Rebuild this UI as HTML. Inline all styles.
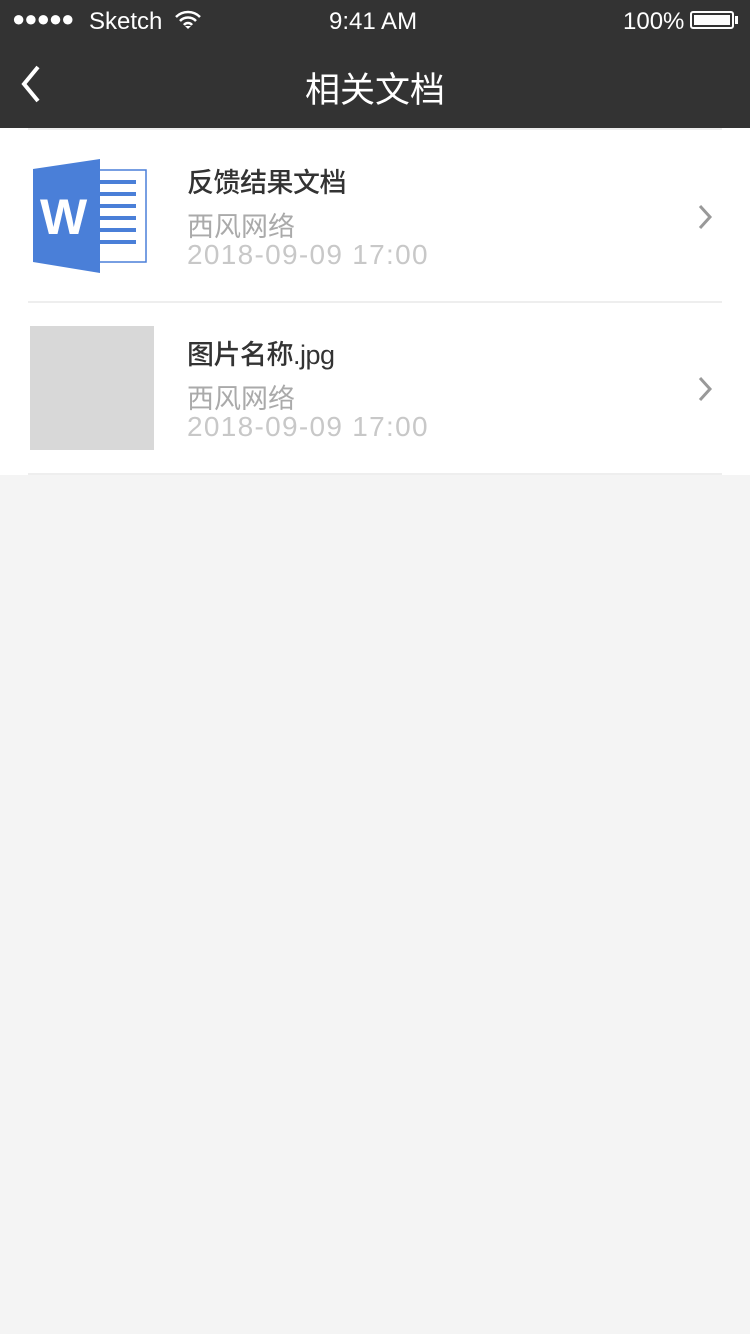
<!DOCTYPE html>
<html><head><meta charset="utf-8"><style>
body{margin:0;width:750px;height:1334px;background:#f4f4f4;font-family:"Liberation Sans","Noto Sans CJK SC",sans-serif;position:relative;overflow:hidden}
.hdr{position:absolute;left:0;top:0;width:750px;height:128px;background:#333}
.t{position:absolute;color:#fff}
.list{position:absolute;left:0;top:128px;width:750px;height:347px;background:#fff}
.sep{position:absolute;left:28px;width:694px;height:2px;background:#eee}
.name{position:absolute;left:187px;font-size:27px;color:#333;font-weight:500;letter-spacing:-0.5px}
.org{position:absolute;left:187px;font-size:27px;color:#aaa}
.dt{position:absolute;left:187px;font-size:28px;color:#c8c8c8;letter-spacing:1.3px}
</style></head><body>
<div class="hdr">
<div class="t" style="left:12px;top:6px;font-size:22px;letter-spacing:-1px">●●●●●</div>
<div class="t" style="left:89px;top:8px;font-size:24px">Sketch</div>
<svg style="position:absolute;left:175px;top:10px" width="26" height="20" viewBox="0 0 26 20"><path d="M1 7a17 17 0 0 1 24 0M5 11a11 11 0 0 1 16 0M9 15a5 5 0 0 1 8 0" stroke="#fff" stroke-width="2.5" fill="none"/><path d="M10 16l3 3 3-3z" fill="#fff"/></svg>
<div class="t" style="left:329px;top:8px;font-size:24px">9:41 AM</div>
<div class="t" style="left:623px;top:8px;font-size:24px">100%</div>
<div style="position:absolute;left:690px;top:11px;width:44px;height:18px;border:2px solid #fff;border-radius:3px;box-sizing:border-box;padding:2px"><div style="background:#fff;height:100%"></div></div>
<div style="position:absolute;left:735px;top:16px;width:3px;height:8px;background:#fff"></div>
<svg style="position:absolute;left:16px;top:64px" width="30" height="40"><path d="M22 3L8 20l14 17" stroke="#fff" stroke-width="4" fill="none"/></svg>
<div class="t" style="left:0;width:750px;text-align:center;top:62px;font-size:35px">相关文档</div>
</div>
<div class="list">
<div class="sep" style="top:0"></div>
<svg style="position:absolute;left:32px;top:30px" width="116" height="116" viewBox="32 158 116 116">
<rect x="99" y="170" width="47" height="92" fill="#fff" stroke="#4a7fd8" stroke-width="1.5"/>
<g fill="#4a7fd8"><rect x="100" y="180" width="36" height="4"/><rect x="100" y="192" width="36" height="4"/><rect x="100" y="204" width="36" height="4"/><rect x="100" y="216" width="36" height="4"/><rect x="100" y="228" width="36" height="4"/><rect x="100" y="240" width="36" height="4"/></g>
<path d="M33 169L100 159V273L33 262Z" fill="#4a7fd8"/>
<text x="40" y="234" fill="#fff" font-family="Liberation Sans" font-weight="bold" font-size="50">W</text>
</svg>
<div class="name" style="top:33px">反馈结果文档</div>
<div class="org" style="top:77px">西风网络</div>
<div class="dt" style="top:111px">2018-09-09 17:00</div>
<svg style="position:absolute;left:696px;top:74px" width="20" height="30"><path d="M4 4l10 11-10 11" stroke="#999" stroke-width="3" fill="none"/></svg>
<div class="sep" style="top:173px"></div>
<div style="position:absolute;left:30px;top:198px;width:124px;height:124px;background:#d8d8d8"></div>
<div class="name" style="top:205px">图片名称.jpg</div>
<div class="org" style="top:249px">西风网络</div>
<div class="dt" style="top:283px">2018-09-09 17:00</div>
<svg style="position:absolute;left:696px;top:246px" width="20" height="30"><path d="M4 4l10 11-10 11" stroke="#999" stroke-width="3" fill="none"/></svg>
<div class="sep" style="top:345px"></div>
</div>
</body></html>
